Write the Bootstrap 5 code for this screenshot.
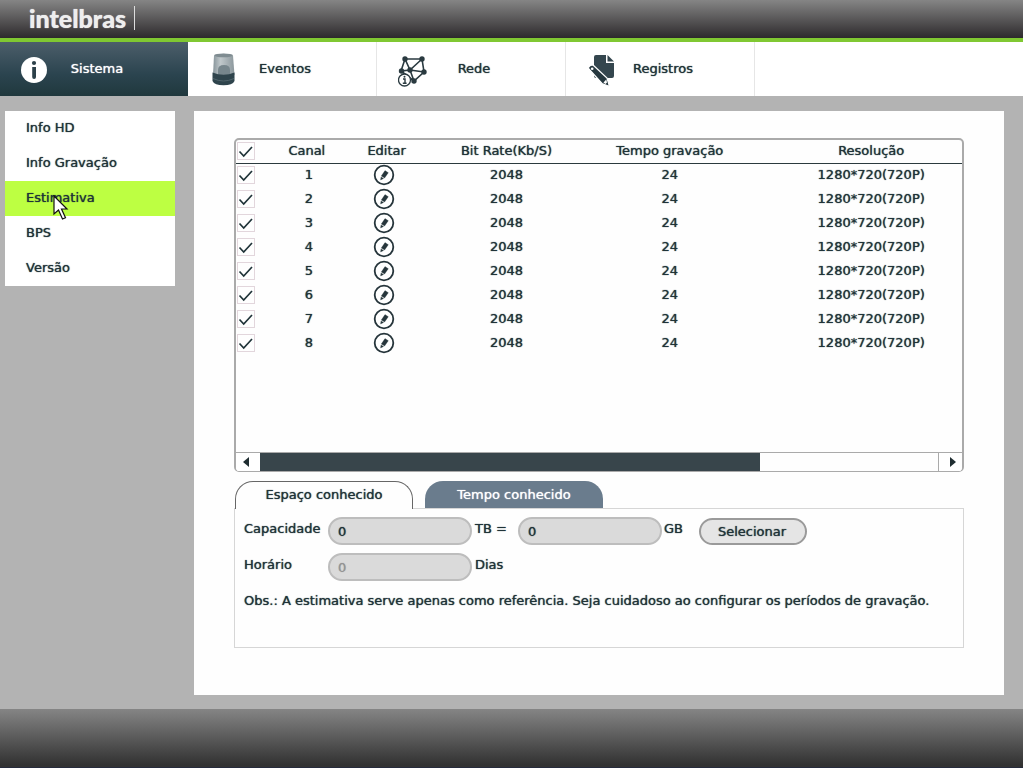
<!DOCTYPE html>
<html lang="pt-BR">
<head>
<meta charset="utf-8">
<meta name="viewport" content="width=device-width, initial-scale=1">
<title>intelbras - Estimativa</title>
<link href="https://cdn.jsdelivr.net/npm/bootstrap@5.3.0/dist/css/bootstrap.min.css" rel="stylesheet">
<style>
  body { font: 13px/24px "DejaVu Sans", Verdana, sans-serif; color: #1f3338; background: #b3b3b3; text-shadow: 0 0 1px currentColor; }
  button, input { text-shadow: inherit; }
  .topbar { height: 42px; padding-left: 29px; background: linear-gradient(#858585, #2d2a2c); border-bottom: 4px solid #80c832; }
  .brand { font: 900 25px/24px Lato, sans-serif; color: #eee; border-right: 1px solid #ddd; padding-right: 8px; margin-top: 6px; text-shadow: 0 0 1px #eee; }
  .modules { background: #fff; height: 54px; }
  .modules .nav-link { width: 189px; height: 54px; padding: 0 0 0 21px; color: #1f3338; border-right: 1px solid #e6e6e6; }
  .modules .nav-link span { width: 92px; }
  .modules .nav-link.active { width: 188px; color: #fff; background: linear-gradient(#4c5e6a, #2b444f 60%, #20383d); border: 0; }
  .workspace { padding: 15px 19px 14px 5px; gap: 19px; }
  .sidemenu { width: 170px; }
  .sidemenu a { height: 35px; padding: 5px 21px; color: #1f3338; background: #fff; text-decoration: none; }
  .sidemenu a.current { background: #bdff42; }
  .pointer { position: absolute; left: 48px; top: 14px; }
  .sheet { background: #fefefe; padding: 27px 40px 40px; }
  .listbox { min-height: 334px; border: 2px solid #aaa; border-bottom-width: 1px; border-radius: 5px; background: #fefefe; }
  .channels { table-layout: fixed; width: 100%; text-align: center; }
  .channels th { font-weight: 400; height: 23px; padding: 0; line-height: 20px; border-bottom: 1px solid #2b3a3e; white-space: nowrap; }
  .channels td { height: 24px; padding: 0; line-height: 22px; }
  .c-check { width: 20px; } .c-num { width: 14%; } .c-edit { width: 8%; } .c-rate { width: 25%; } .c-time { width: 20%; }
  .channels .c-res { padding-left: 38px; }
  .channels .c-pen { padding-right: 6px; }
  .tick { appearance: none; display: block; width: 18px; height: 18px; margin: 0 1px; border: 1px solid #e2d6dc;
    background: url("data:image/svg+xml,%3Csvg xmlns='http://www.w3.org/2000/svg' viewBox='0 0 16 16'%3E%3Cpath d='M1.5 8.5 5.7 13 14 4' fill='none' stroke='%231f3338' stroke-width='1.7'/%3E%3C/svg%3E"); }
  .edit { display: block; width: 22px; height: 22px; margin: 0 auto; padding: 0; border: 0; background: none; }
  .edit svg { display: block; }
  .hscroll { height: 19px; border-top: 1px solid #aaa; }
  .hscroll button { width: 24px; padding: 0 4px 0 0; border: 0; background: #fff; }
  .hscroll button svg { display: block; margin: auto; }
  .hscroll button:last-child { border-left: 1px solid #aaa; padding: 0 0 0 4px; }
  .thumb { height: 100%; background: #38454b; }
  .modes { margin: 9px 1px 0; gap: 12px; }
  .modes button { width: 178px; height: 27px; padding: 0; border: 0; border-radius: 18px 18px 0 0; color: #fff; background: #6a7c8d; }
  .modes button.active { color: #1f3338; background: #fefefe; border: 1px solid #666; border-bottom: 0; height: 28px; margin-bottom: -1px; padding-bottom: 2px; position: relative; }
  .modepanel { border: 1px solid #d6d6d6; min-height: 140px; padding: 8px 9px; gap: 8px; }
  .lab { width: 84px; } .unit { width: 46px; padding-left: 3px; } .unit-gb { width: 37px; padding-left: 2px; }
  .pill { width: 144px; height: 28px; padding: 0 8px; border: 2px solid #bdbdbd; border-radius: 14px; background: #dadada; color: #1f3338; }
  .pill:disabled { color: #939393; }
  .pick { width: 108px; height: 27px; margin-top: 1px; padding: 0 2px 2px 0; border: 2px solid #9a9a9a; border-radius: 14px; background: #e5e5e5; color: #1f3338; }
  .bottombar { height: 59px; background: linear-gradient(#858585, #323232 96%); border-bottom: 1px solid #262b3c; }
</style>
</head>
<body class="min-vh-100 d-flex flex-column">
<svg class="d-none" aria-hidden="true">
  <symbol id="pencil" viewBox="0 0 22 22">
    <circle cx="11" cy="11" r="9.3" fill="#fff" stroke="#26353b" stroke-width="1.8"/>
    <path d="M12 6.600l3.300 2.100-3.700 5.300-3.300-2zM8 12.900l2.600 1.600-3 1.500z" fill="#26353b" stroke="#26353b" stroke-width=".3"/>
  </symbol>
</svg>
<header>
  <div class="topbar d-flex align-items-start"><div class="brand">intelbras</div></div>
  <nav class="modules d-flex" aria-label="Módulos">
    <a class="nav-link active d-flex align-items-center" href="#" aria-current="page">
      <svg width="30" height="36"><circle cx="13" cy="19" r="13" fill="#fff"/><circle cx="13" cy="12" r="2.1" fill="#2c4049"/><path d="M11.200 16h3.800v10a1.900 1.900 0 0 1-3.800 0z" fill="#2c4049"/></svg>
      <span class="text-center">Sistema</span></a>
    <a class="nav-link d-flex align-items-center" href="#">
      <svg width="30" height="36">
        <defs><linearGradient id="glass"><stop stop-color="#87949a"/><stop offset=".35" stop-color="#c0c8cb"/><stop offset="1" stop-color="#8b979c"/></linearGradient></defs>
        <path d="M5 4.500Q14.500 1 24 4.500L25.500 24H4z" fill="url(#glass)"/><ellipse cx="14.500" cy="4.300" rx="9.300" ry="1.900" fill="#7f8c91"/>
        <path d="M9 24v-5q0-5 6-5t6 5v5z" fill="#77868c"/>
        <path d="M3.500 21.500q11 4.500 22 0v8.500q-2 4.300-11 4.300T3.500 30z" fill="#2f444c"/><path d="M4 27.500q10.500 5 21 0" fill="none" stroke="#50646b"/></svg>
      <span class="text-center">Eventos</span></a>
    <a class="nav-link d-flex align-items-center" href="#">
      <svg width="30" height="36">
        <g stroke="#2a3a40" stroke-width="1.600" fill="none"><path d="M7 8h17l2 13-10 9-4-11L7 8 3 20l9-1 12-11M12 19l14 2M3 20l13 10"/></g>
        <g fill="#2a3a40"><circle cx="7" cy="8" r="2.700"/><circle cx="24" cy="8" r="2.700"/><circle cx="3.500" cy="20" r="2.700"/><circle cx="12" cy="19" r="2.700"/><circle cx="26" cy="21" r="2.700"/><circle cx="16" cy="30" r="2.700"/></g>
        <circle cx="6.500" cy="29" r="6" fill="#fff" stroke="#2a3a40" stroke-width="1.300"/><path d="M5 28h2v4M4.800 32.300h3.800" stroke="#2a3a40" stroke-width="1.400" fill="none"/><circle cx="6.500" cy="25.700" r="1" fill="#2a3a40"/></svg>
      <span class="text-center">Rede</span></a>
    <a class="nav-link d-flex align-items-center" href="#">
      <svg width="30" height="36">
        <path d="M9 4h10v8h8v13q0 2-2 2H9q-2 0-2-2V6q0-2 2-2z" fill="#34464e"/><path d="M20.500 4v6.500H27z" fill="#34464e"/>
        <path d="M1.500 17.500q0-3 4.500-3.500L20 27l2.500 8.500-7.500-3z" fill="#26383f" stroke="#fff" stroke-width="1.200"/><path d="M16.500 31.500l2.800-3 .7 3-1.500 1.400z" fill="#fff"/><circle cx="5.200" cy="17.700" r="1.300" fill="#fff"/></svg>
      <span class="text-center">Registros</span></a>
  </nav>
</header>
<div class="workspace d-flex flex-grow-1">
  <nav class="sidemenu flex-shrink-0" aria-label="Sistema">
    <a class="d-block" href="#">Info HD</a>
    <a class="d-block" href="#">Info Gravação</a>
    <a class="d-block current position-relative" href="#" aria-current="page">Estimativa<svg class="pointer" width="16" height="25"><path d="M1 1v18l4.500-4 4 9 3-1.300-4-8.700H14z" fill="#fff" stroke="#111" stroke-width="1.200"/></svg></a>
    <a class="d-block" href="#">BPS</a>
    <a class="d-block" href="#">Versão</a>
  </nav>
  <main class="sheet flex-grow-1">
    <div class="listbox d-flex flex-column justify-content-between overflow-hidden">
      <table class="channels">
        <thead><tr>
          <th class="c-check"><input class="tick" type="checkbox" checked aria-label="Todos os canais"></th>
          <th class="c-num">Canal</th><th class="c-edit">Editar</th><th class="c-rate">Bit Rate(Kb/S)</th><th class="c-time">Tempo gravação</th><th class="c-res">Resolução</th>
        </tr></thead>
        <tbody id="rows"></tbody>
      </table>
      <div class="hscroll d-flex">
        <button aria-label="Rolar para a esquerda"><svg width="6" height="10"><path d="M6 0v10L0 5z" fill="#1f2d31"/></svg></button>
        <div class="flex-grow-1"><div class="thumb" style="width:73.7%"></div></div>
        <button aria-label="Rolar para a direita"><svg width="6" height="10"><path d="M0 0v10l6-5z" fill="#1f2d31"/></svg></button>
      </div>
    </div>
    <div class="modes d-flex" role="tablist">
      <button class="active" role="tab" aria-selected="true">Espaço conhecido</button>
      <button role="tab" aria-selected="false">Tempo conhecido</button>
    </div>
    <form class="modepanel d-flex flex-column">
      <div class="d-flex align-items-start">
        <label class="lab" for="tb">Capacidade</label><input class="pill" id="tb" type="text" value="0"><span class="unit">TB =</span>
        <input class="pill" type="text" value="0" aria-label="Capacidade em GB"><span class="unit-gb">GB</span>
        <button class="pick" type="button">Selecionar</button>
      </div>
      <div class="d-flex align-items-start">
        <label class="lab" for="dias">Horário</label><input class="pill" id="dias" type="text" value="0" disabled><span class="unit">Dias</span>
      </div>
      <p class="mb-0">Obs.: A estimativa serve apenas como referência. Seja cuidadoso ao configurar os períodos de gravação.</p>
    </form>
  </main>
</div>
<footer class="bottombar"></footer>
<script src="https://cdn.jsdelivr.net/npm/bootstrap@5.3.0/dist/js/bootstrap.bundle.min.js"></script>
<script>
  // One row per recording channel
  document.getElementById('rows').innerHTML = [1, 2, 3, 4, 5, 6, 7, 8].map(n => `<tr>
    <td><input class="tick" type="checkbox" checked aria-label="Canal ${n}"></td><td class="ps-1">${n}</td>
    <td class="c-pen"><button class="edit" aria-label="Editar canal ${n}"><svg width="22" height="22"><use href="#pencil"/></svg></button></td>
    <td>2048</td><td>24</td><td class="c-res">1280*720(720P)</td></tr>`).join('');
</script>
</body>
</html>
